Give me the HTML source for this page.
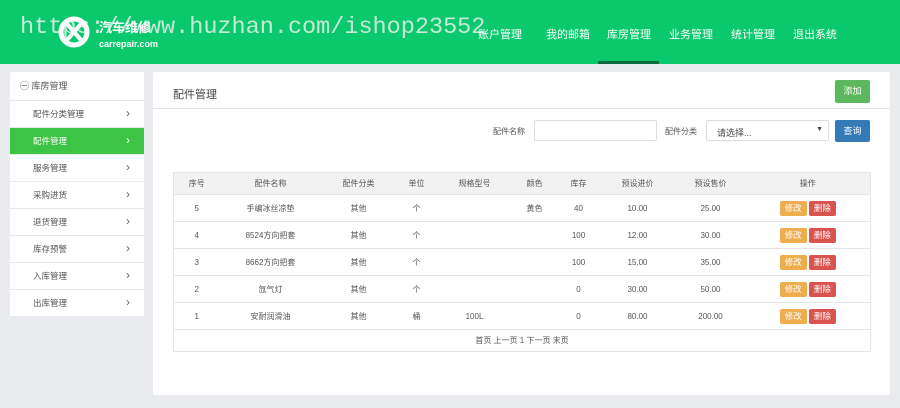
<!DOCTYPE html>
<html><head><meta charset="utf-8"><style>
*{margin:0;padding:0;box-sizing:border-box}
body{width:900px;height:408px;background:#e9ebee;font-family:"Liberation Sans","Noto Sans CJK SC",sans-serif;font-size:9px;color:#555;position:relative;overflow:hidden}
.hdr{position:absolute;left:0;top:0;width:900px;height:64px;background:#09c96c}
.nav{position:absolute;top:26px;color:#fff;font-size:11px;white-space:nowrap}
.ul{position:absolute;left:598px;top:61px;width:61px;height:3px;background:#0a6b3c}
.wm{position:absolute;left:20px;top:14px;font-family:"Liberation Mono",monospace;font-size:23.5px;color:#f4f4f4;opacity:.8;white-space:nowrap;font-weight:300}
.logo{position:absolute;left:58px;top:16px;width:32px;height:32px}
.lt{position:absolute;left:99px;top:17px;color:#fff;font-size:13px;font-weight:bold}
.lc{position:absolute;left:99px;top:39px;color:#fff;font-size:9px;font-weight:bold}
.side{position:absolute;left:10px;top:72px;width:134px;height:244px;background:#fff;border-radius:2px}
.si{height:27px;line-height:27px;border-top:1px solid #e8e8e8;padding-left:23px;font-size:8.5px;color:#555;position:relative}
.si:after{content:"›";position:absolute;right:14px;top:-1px;font-size:12px;color:#666}
.si.act{background:#3ec444;color:#fff}.si.act:after{color:#fff}
.sh{height:28px;line-height:28px;padding-left:10px;font-size:9px;color:#555}
.main{position:absolute;left:153px;top:72px;width:737px;height:323px;background:#fff;border-radius:2px}
.title{position:absolute;left:20px;top:14px;font-size:11px;color:#444}
.line{position:absolute;left:0;top:36px;width:737px;height:1px;background:#e5e5e5}
.btn{position:absolute;color:#fff;font-size:9px;text-align:center;border-radius:2px}
table{position:absolute;left:20px;top:100px;border-collapse:collapse;width:697px;table-layout:fixed}
td,th{height:27px;text-align:center;font-size:8px;color:#555;border-top:1px solid #e5e5e5;font-weight:normal}
th{height:22px;background:#f2f2f2}
table{border:1px solid #e5e5e5}
.b{display:inline-block;width:27px;height:15px;line-height:15px;color:#fff;border-radius:2px;font-size:8.5px}
</style></head><body>
<div class="hdr"></div>
<svg class="logo" viewBox="0 0 32 32"><circle cx="16" cy="16" r="13" fill="none" stroke="#fff" stroke-width="5"/><path d="M9 8L23 24M23 8L9 24" stroke="#fff" stroke-width="4"/></svg>
<div class="lt">汽车维修</div>
<div class="lc">carrepair.com</div>
<div class="wm">https://www.huzhan.com/ishop23552</div>
<div class="nav" style="left:478px">账户管理</div>
<div class="nav" style="left:546px">我的邮箱</div>
<div class="nav" style="left:607px">库房管理</div>
<div class="nav" style="left:669px">业务管理</div>
<div class="nav" style="left:731px">统计管理</div>
<div class="nav" style="left:793px">退出系统</div>
<div class="ul"></div>
<div class="side">
<div class="sh">㊀ 库房管理</div>
<div class="si">配件分类管理</div>
<div class="si act">配件管理</div>
<div class="si">服务管理</div>
<div class="si">采购进货</div>
<div class="si">退货管理</div>
<div class="si">库存预警</div>
<div class="si">入库管理</div>
<div class="si">出库管理</div>
</div>
<div class="main">
<div class="title">配件管理</div>
<div class="btn" style="left:682px;top:8px;width:35px;height:23px;line-height:23px;background:#5cb85c">添加</div>
<div class="line"></div>
<div style="position:absolute;left:340px;top:54px;font-size:8px">配件名称</div>
<div style="position:absolute;left:381px;top:48px;width:123px;height:21px;border:1px solid #ddd;border-radius:2px"></div>
<div style="position:absolute;left:512px;top:54px;font-size:8px">配件分类</div>
<div style="position:absolute;left:553px;top:48px;width:123px;height:21px;border:1px solid #ddd;border-radius:2px;font-size:9px;padding:5px 10px;color:#444">请选择...<span style="position:absolute;right:5px;top:5px;font-size:7px">▼</span></div>
<div class="btn" style="left:682px;top:48px;width:35px;height:22px;line-height:22px;background:#337ab7">查询</div>
<table>
<colgroup><col style="width:46px"><col style="width:102px"><col style="width:74px"><col style="width:42px"><col style="width:74px"><col style="width:46px"><col style="width:42px"><col style="width:76px"><col style="width:70px"><col style="width:125px"></colgroup>
<tr><th>序号</th><th>配件名称</th><th>配件分类</th><th>单位</th><th>规格型号</th><th>颜色</th><th>库存</th><th>预设进价</th><th>预设售价</th><th>操作</th></tr>
<tr><td>5</td><td>手编冰丝凉垫</td><td>其他</td><td>个</td><td></td><td>黄色</td><td>40</td><td>10.00</td><td>25.00</td><td><span class="b" style="background:#f0ad4e">修改</span> <span class="b" style="background:#d9534f">删除</span></td></tr>
<tr><td>4</td><td>8524方向把套</td><td>其他</td><td>个</td><td></td><td></td><td>100</td><td>12.00</td><td>30.00</td><td><span class="b" style="background:#f0ad4e">修改</span> <span class="b" style="background:#d9534f">删除</span></td></tr>
<tr><td>3</td><td>8662方向把套</td><td>其他</td><td>个</td><td></td><td></td><td>100</td><td>15.00</td><td>35.00</td><td><span class="b" style="background:#f0ad4e">修改</span> <span class="b" style="background:#d9534f">删除</span></td></tr>
<tr><td>2</td><td>氙气灯</td><td>其他</td><td>个</td><td></td><td></td><td>0</td><td>30.00</td><td>50.00</td><td><span class="b" style="background:#f0ad4e">修改</span> <span class="b" style="background:#d9534f">删除</span></td></tr>
<tr><td>1</td><td>安耐润滑油</td><td>其他</td><td>桶</td><td>100L</td><td></td><td>0</td><td>80.00</td><td>200.00</td><td><span class="b" style="background:#f0ad4e">修改</span> <span class="b" style="background:#d9534f">删除</span></td></tr>
<tr><td colspan="10" style="height:22px">首页 上一页 1 下一页 末页</td></tr>
</table>
</div>
</body></html>
